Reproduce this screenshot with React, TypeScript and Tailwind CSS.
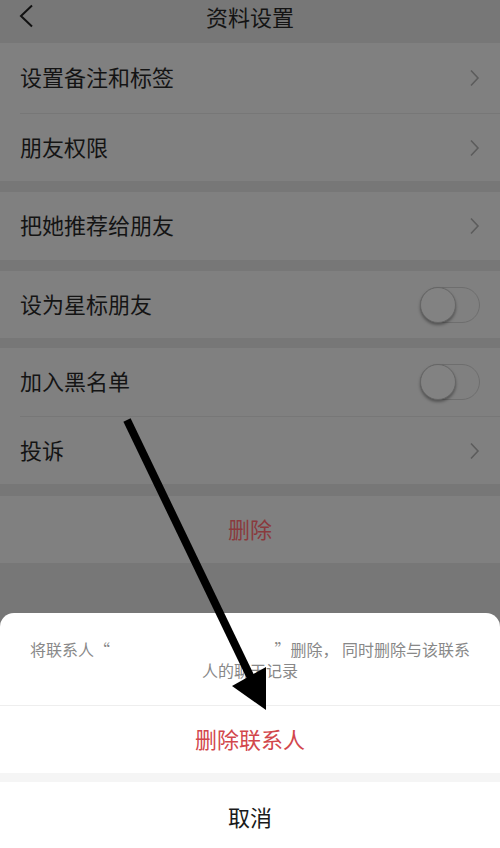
import React from "react";

const font = { fontFamily: '"Noto Sans CJK SC", "Noto Sans", sans-serif' };

function Chevron() {
  return (
    <svg width="12" height="18" viewBox="0 0 12 18" className="shrink-0">
      <polyline points="3,1.5 10,9 3,16.5" fill="none" stroke="#5c5c5c" strokeWidth="1.6" />
    </svg>
  );
}

function Toggle() {
  return (
    <div className="relative w-[60px] h-[36px] rounded-full border border-[#6e6e6e] shrink-0">
      <div className="absolute left-[-1px] top-[-1px] w-[36px] h-[36px] rounded-full border border-[#666] bg-[#828282] shadow-[0_2px_3px_rgba(0,0,0,0.35)]" />
    </div>
  );
}

function Row({ label, h, right }: { label: string; h: string; right: "chev" | "toggle" }) {
  return (
    <div className={`flex items-center justify-between pl-[20px] pr-[20px] bg-[#808080] shrink-0 ${h}`}>
      <span className="text-[22px] text-[#141414] leading-none pb-[4px]">{label}</span>
      {right === "chev" ? <Chevron /> : <Toggle />}
    </div>
  );
}

export default function App() {
  return (
    <div className="relative w-[500px] h-[848px] overflow-hidden bg-[#777777] flex flex-col" style={font}>
      <div className="relative h-[43px] flex items-center justify-center bg-[#777777] shrink-0">
        <svg width="16" height="26" viewBox="0 0 16 26" className="absolute left-[18px] top-[4px]">
          <polyline points="14,1.5 3,12 14,22.5" fill="none" stroke="#111" strokeWidth="2" />
        </svg>
        <span className="text-[22px] text-[#141414] leading-none -mt-[11px]">资料设置</span>
      </div>
      <Row label="设置备注和标签" h="h-[70px]" right="chev" />
      <div className="bg-[#808080] pl-[20px] shrink-0"><div className="h-px bg-[#777777]" /></div>
      <Row label="朋友权限" h="h-[67px]" right="chev" />
      <div className="h-[11px] shrink-0" />
      <Row label="把她推荐给朋友" h="h-[68px]" right="chev" />
      <div className="h-[11px] shrink-0" />
      <Row label="设为星标朋友" h="h-[67px]" right="toggle" />
      <div className="h-[10px] shrink-0" />
      <Row label="加入黑名单" h="h-[68px]" right="toggle" />
      <div className="bg-[#808080] pl-[20px] shrink-0"><div className="h-px bg-[#777777]" /></div>
      <Row label="投诉" h="h-[67px]" right="chev" />
      <div className="h-[12px] shrink-0" />
      <div className="h-[67px] flex items-center justify-center bg-[#808080] shrink-0">
        <span className="text-[22px] text-[#8a3a3d] leading-none pb-[4px]">删除</span>
      </div>
      <div className="flex-1" />
      <div className="h-[235px] shrink-0 bg-white rounded-t-[14px] flex flex-col">
        <div className="h-[92px] flex flex-col items-center justify-center text-[16px] leading-[21px] text-[#888888] pt-[2px]">
          <div className="flex w-full px-[30px] justify-between">
            <span>将联系人“</span>
            <span>”删除， 同时删除与该联系</span>
          </div>
          <div>人的聊天记录</div>
        </div>
        <div className="h-px bg-[#eeeeee]" />
        <div className="h-[67px] flex items-center justify-center">
          <span className="text-[22px] text-[#d2474c] leading-none pb-[4px]">删除联系人</span>
        </div>
        <div className="h-[9px] bg-[#f5f5f5]" />
        <div className="flex-1 flex items-center justify-center pt-[2px]">
          <span className="text-[22px] text-[#1a1a1a] leading-none">取消</span>
        </div>
      </div>
      <svg className="absolute left-0 top-0 pointer-events-none" width="500" height="848" viewBox="0 0 500 848">
        <line x1="127" y1="420" x2="252" y2="680" stroke="#000" strokeWidth="8" />
        <polygon points="232,686 266,667 266,710" fill="#000" />
      </svg>
    </div>
  );
}
